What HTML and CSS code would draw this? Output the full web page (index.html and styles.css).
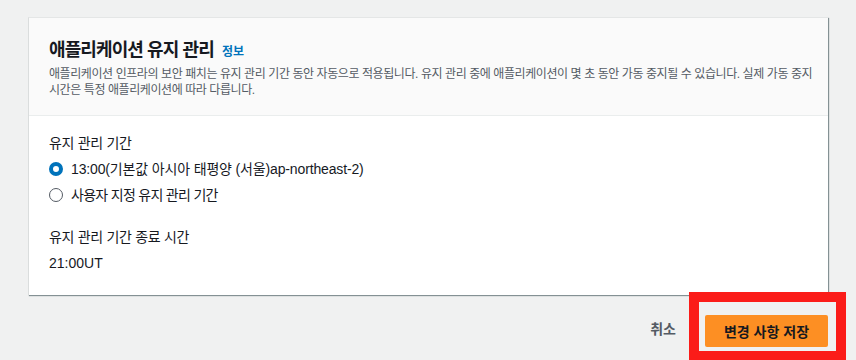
FILE: index.html
```html
<!DOCTYPE html>
<html lang="ko">
<head>
<meta charset="utf-8">
<link rel="stylesheet" href="styles.css">
</head>
<body>
<div class="page">
  <section class="card">
    <header class="card-header">
      <h2 class="title">애플리케이션 유지 관리 <a class="info" href="#">정보</a></h2>
      <p class="desc">애플리케이션 인프라의 보안 패치는 유지 관리 기간 동안 자동으로 적용됩니다. 유지 관리 중에 애플리케이션이 몇 초 동안 가동 중지될 수 있습니다. 실제 가동 중지 시간은 특정 애플리케이션에 따라 다릅니다.</p>
    </header>
    <div class="card-body">
      <div class="field">
        <div class="label">유지 관리 기간</div>
        <label class="radio"><span class="dot checked"></span><span class="mixed">13:00(기본값 아시아 태평양 (서울)ap-northeast-2)</span></label>
        <label class="radio"><span class="dot"></span><span class="hangul">사용자 지정 유지 관리 기간</span></label>
      </div>
      <div class="field">
        <div class="label">유지 관리 기간 종료 시간</div>
        <div class="value">21:00UT</div>
      </div>
    </div>
  </section>
  <div class="actions">
    <button class="link-btn">취소</button>
    <div class="highlight">
      <button class="primary">변경 사항 저장</button>
    </div>
  </div>
</div>
</body>
</html>
```

FILE: styles.css
```css
* { box-sizing: border-box; }
html, body { margin: 0; padding: 0; }
body {
  background: #f0f1f1;
  font-family: "Liberation Sans", "Noto Sans CJK KR", sans-serif;
  color: #16191f;
  width: 856px;
  height: 360px;
  overflow: hidden;
}
.page {
  padding: 17px 28px 0 28px;
}
.card {
  background: #fff;
  border-top: 1px solid #e4e6e6;
  border-left: 1px solid #dadddd;
  box-shadow: 1px 1px 1px 0 rgba(0, 28, 36, 0.45);
  width: 800px;
}
.card-header {
  background: #fafafa;
  border-bottom: 1px solid #eaeded;
  padding: 20px 12px 20px 20px;
  height: 98px;
}
.title {
  margin: 0;
  font-size: 18px;
  font-weight: 700;
  line-height: 24px;
  letter-spacing: -0.9px;
}
.info {
  font-size: 12px;
  color: #0073bb;
  text-decoration: none;
  font-weight: 700;
  margin-left: 4px;
  letter-spacing: 0;
}
.desc {
  margin: 2px 0 0 0;
  font-size: 12px;
  line-height: 16px;
  color: #545b64;
  letter-spacing: -0.42px;
  word-break: keep-all;
}
.card-body {
  padding: 17px 20px 21px 20px;
  height: 179px;
}
.field + .field { margin-top: 19px; }
.label {
  font-size: 14px;
  line-height: 20px;
  margin-bottom: 3px;
  letter-spacing: -0.3px;
}
.radio {
  display: flex;
  align-items: center;
  gap: 8px;
  font-size: 14px;
  line-height: 20px;
  height: 26px;
}
.mixed { letter-spacing: -0.15px; }
.hangul { letter-spacing: -0.7px; }
.dot {
  width: 14px;
  height: 14px;
  border-radius: 50%;
  border: 1px solid #545b64;
  flex: none;
  background: #fff;
}
.dot.checked {
  border: 4px solid #0073bb;
}
.value {
  font-size: 14px;
  line-height: 20px;
  margin-top: 6px;
}
.actions {
  display: flex;
  justify-content: flex-end;
  align-items: center;
  margin-right: -18px;
  margin-top: -3px;
}
.link-btn {
  background: none;
  border: none;
  font-family: inherit;
  font-size: 14px;
  font-weight: 700;
  color: #545b64;
  padding: 0;
  margin: 2px 13px 0 0;
}
.highlight {
  border: 10px solid #fb1c19;
  padding: 13px 8px 4px 6px;
}
.primary {
  background: #fd8f23;
  border: none;
  border-radius: 2px;
  width: 123px;
  height: 32px;
  font-family: inherit;
  font-size: 14px;
  font-weight: 700;
  color: #16191f;
  padding: 0;
}
```
